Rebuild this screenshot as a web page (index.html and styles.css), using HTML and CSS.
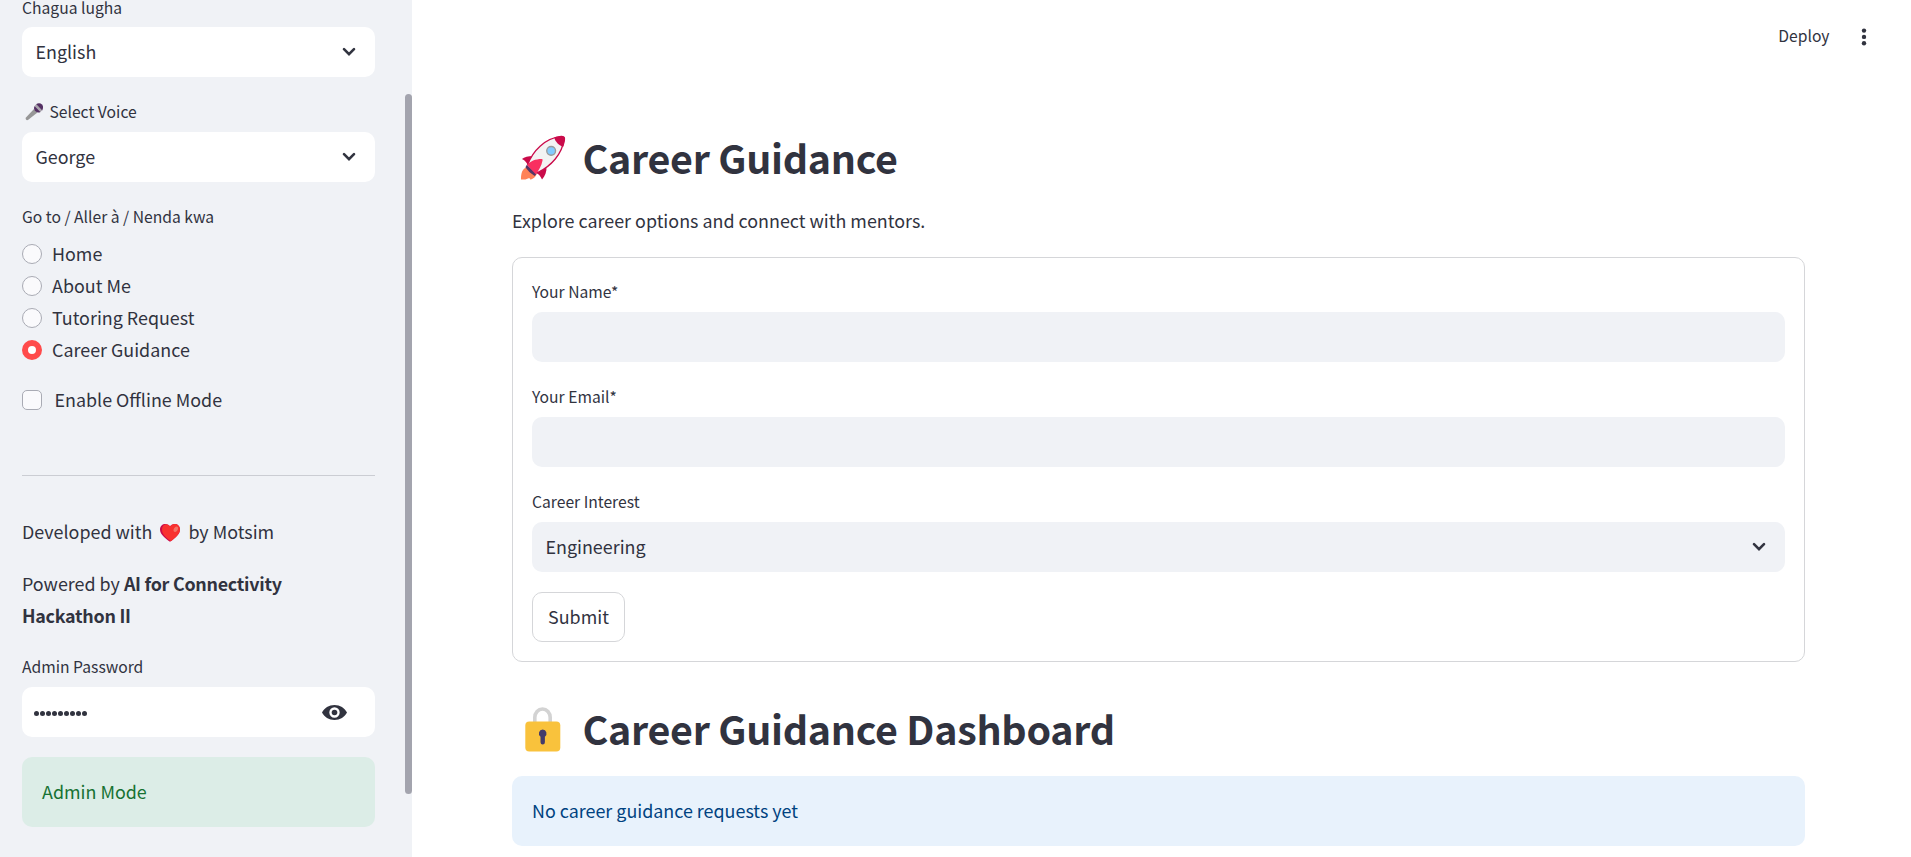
FILE: index.html
```html
<!DOCTYPE html>
<html lang="en">
<head>
<meta charset="utf-8">
<title>Career Guidance</title>
<link rel="stylesheet" href="styles.css">
</head>
<body>
<div class="app">
  <aside class="sidebar">
    <div class="field">
      <div class="label first">Chagua lugha</div>
      <div class="control select"><span>English</span><svg class="chevron" viewBox="0 0 14 10"><path d="M2 2.200 7 7.200l5-5"/></svg></div>
    </div>
    <div class="field">
      <div class="label"><svg class="mic" viewBox="0 0 18 18"><path d="M9 6 1.200 14.200Q0 15.500 1 16.600t2.600-.1L12.500 9.500Z" fill="#979797"/><path d="M11 1.200C13 0 15.500 0 17 1.500s1.300 4 0 6.200Z" fill="#543063"/><path d="M11.200 1.200 17 7.200 15.500 9 9.600 2.900Z" fill="#aaa5ad"/><path d="m9.600 2.900 5.900 6.100Q13 10.200 10.800 8.600 8 6 9.600 2.900Z" fill="#543063"/></svg><span>Select Voice</span></div>
      <div class="control select"><span>George</span><svg class="chevron" viewBox="0 0 14 10"><path d="M2 2.200 7 7.200l5-5"/></svg></div>
    </div>
    <div class="field">
      <div class="label">Go to / Aller à / Nenda kwa</div>
      <div class="radios">
        <div class="option"><i class="radio"></i><span>Home</span></div>
        <div class="option"><i class="radio"></i><span>About Me</span></div>
        <div class="option"><i class="radio"></i><span>Tutoring Request</span></div>
        <div class="option"><i class="radio checked"></i><span>Career Guidance</span></div>
      </div>
    </div>
    <div class="option offline"><i class="checkbox"></i><span>Enable Offline Mode</span></div>
    <hr class="divider">
    <p class="credit"><span>Developed with</span><svg class="heart" viewBox="0 0 20 18"><path d="M10 17.800C5 14 0 10.500 0 5.500 0 2 2.500 0 5.300 0 7.500 0 9.200 1 10 2.600 10.800 1 12.500 0 14.700 0 17.500 0 20 2 20 5.500c0 5-5 8.500-10 12.300Z" fill="#ca0b4a"/><path d="M10.800 17.200C5.800 13.500 2 10.500 2 5.600 2 2.300 3.800.4 6 .2c2 0 3.500 1 4.200 2.500C11 1 12.600 0 14.700 0 17.500 0 20 2 20 5.500c0 4.700-4.500 8.200-9.200 11.700Z" fill="#f8312f"/><ellipse cx="15.800" cy="5.300" rx="1.900" ry="2.900" transform="rotate(30 15.800 5.300)" fill="#f37366"/></svg><span>by Motsim</span></p>
    <p class="powered">Powered by <b>AI for Connectivity<br>Hackathon II</b></p>
    <div class="field">
      <div class="label">Admin Password</div>
      <div class="control password"><span class="dots"><i></i><i></i><i></i><i></i><i></i><i></i><i></i><i></i><i></i></span><svg class="eye" viewBox="0 0 25 15"><path fill-rule="evenodd" d="M12.500 0C7 0 2.200 3 0 7.500 2.200 12 7 15 12.500 15S22.800 12 25 7.500C22.800 3 18 0 12.500 0Zm0 2.300a5.200 5.200 0 1 1 0 10.400 5.200 5.200 0 0 1 0-10.400Z"/><circle cx="12.500" cy="7.500" r="2.800"/></svg></div>
    </div>
    <div class="alert success">Admin Mode</div>
    <div class="scrollbar"></div>
  </aside>
  <main class="main">
    <header class="toolbar"><span>Deploy</span><svg class="kebab" viewBox="0 0 6 18"><circle cx="3" cy="2.600" r="2.200"/><circle cx="3" cy="8.900" r="2.200"/><circle cx="3" cy="15.200" r="2.200"/></svg></header>
    <section class="content">
      <h1 class="title"><svg class="emoji" viewBox="0 -0.5 49 49"><path d="M7 33.500C2.500 35 1 39 1 46h4.500l4-1.500 1 1.500c4-1 7-4 6.500-7.500Z" fill="#ff8257"/><path d="M2 25c3-3 9-3.500 15-3L8 32Q7 27.500 2 25ZM27 33c.5 5-1.500 9.500-4.500 13-1.500-3.500-3.500-6-6.500-7Z" fill="#ca0b4a"/><path d="M8 30.500C13 17 25 4 42 2q3-.3 3 3c-2 15-13 27-27 34Z" fill="#f3f3f3" stroke="#ca0b4a" stroke-width="1.300"/><path d="M35 3C39 1.500 43 1 45 2s.8 5.500-.8 10.500C40 11.500 36 7.500 35 3Z" fill="#ca0b4a"/><path d="m7 31 10 9-2 2.500Q9 39 5.500 33.500Z" fill="#533566"/><path d="M7.500 31.500C10 27 16 25 22 25q1.500 0 1 1.500C22 32 19 37 16 40.500Z" fill="#f92f60"/><circle cx="31.800" cy="16.700" r="4.500" fill="#83cbff" stroke="#9b9b9b" stroke-width="1.400"/></svg><span>Career Guidance</span></h1>
      <p class="intro">Explore career options and connect with mentors.</p>
      <form class="form">
        <div class="field"><div class="label">Your Name*</div><div class="control"></div></div>
        <div class="field"><div class="label">Your Email*</div><div class="control"></div></div>
        <div class="field"><div class="label">Career Interest</div><div class="control select"><span>Engineering</span><svg class="chevron" viewBox="0 0 14 10"><path d="M2 2.200 7 7.200l5-5"/></svg></div></div>
        <button class="submit" type="button">Submit</button>
      </form>
      <h1 class="title second"><svg class="emoji" viewBox="-5 0 48 48"><path d="M9.800 20v-7.500a7.700 8.500 0 0 1 15.400 0V20" fill="none" stroke="#d3d3d3" stroke-width="3.600"/><rect x=".3" y="16.500" width="35" height="30" rx="4" fill="#f9c23c"/><path d="M17.700 24.500a4 4 0 0 1 2.200 7.200v5.500a2.200 2.200 0 0 1-4.400 0v-5.500a4 4 0 0 1 2.200-7.200Z" fill="#433b6b"/></svg><span>Career Guidance Dashboard</span></h1>
      <div class="alert info">No career guidance requests yet</div>
    </section>
  </main>
</div>
</body>
</html>
```
FILE: styles.css
```css
* { box-sizing: border-box; }
body {
  margin: 0;
  overflow: hidden;
  background: #fff;
  color: #31333f;
  font-family: "Noto Sans CJK SC", "Noto Sans", sans-serif;
  font-size: 17.9px;
  line-height: 32px;
}
p, h1 { margin: 0; }
.app { display: flex; height: 857px; }
.sidebar {
  position: relative;
  width: 412px;
  flex: none;
  background: #f0f2f6;
  padding: 0 37px 0 22px;
  display: flex;
  flex-direction: column;
  gap: 20px;
  overflow: hidden;
}
.sidebar > * { flex: none; }
.scrollbar {
  position: absolute;
  left: 405px;
  top: 94px;
  width: 7px;
  height: 700px;
  border-radius: 4px;
  background: #a3a4ae;
}
.label {
  display: flex;
  align-items: center;
  height: 30px;
  margin-bottom: 5px;
  font-size: 15.66px;
  line-height: 30px;
  white-space: nowrap;
}
.label.first { height: 22px; line-height: 16px; align-items: flex-start; }
.control {
  display: flex;
  align-items: center;
  height: 50px;
  border-radius: 10px;
  background: #fff;
}
.select { justify-content: space-between; padding: 0 19px 0 13.5px; }
.control > span, .option > span, .credit > span, .toolbar > span { padding-bottom: 2px; }
.chevron { width: 14px; height: 10px; fill: none; stroke: #31333f; stroke-width: 2.6; stroke-linecap: round; }
.mic { width: 18px; height: 18px; margin: 0 6.5px 0 3px; }
.radios { padding-top: 1px; }
.option { display: flex; align-items: center; height: 32px; gap: 10px; }
.offline { gap: 12.5px; margin-top: -2px; }
.radio, .checkbox {
  width: 20px;
  height: 20px;
  border: 1px solid #a9abb4;
  border-radius: 50%;
  background: #fafafc;
}
.checkbox { border-radius: 5px; }
.radio.checked { border: 6px solid #ff4b4b; background: #fff; }
.divider {
  width: 100%;
  height: 1px;
  margin: 39px 0 20px;
  border: 0;
  background: #cbcdd3;
}
.credit { display: flex; align-items: center; height: 32px; }
.heart { width: 20px; height: 18px; margin: 1px 8px 0; }
.powered { height: 64px; margin-top: -1px; margin-bottom: 1px; }
.powered b { letter-spacing: -0.27px; }
.password { justify-content: space-between; padding: 0 28px 0 10px; }
.dots { display: flex; gap: 1.1px; }
.control > .dots { padding: 3px 0 0 1.5px; }
.dots i { width: 5px; height: 5px; border-radius: 50%; background: #31333f; }
.eye { width: 25px; height: 15px; fill: #31333f; }
.alert { height: 70px; padding: 18px 20px; border-radius: 10px; }
.success { background: #dcede7; color: #177233; }
.info { background: #e8f2fc; color: #004280; }
.main { flex: 1; display: flex; flex-direction: column; }
.toolbar {
  display: flex;
  justify-content: flex-end;
  align-items: center;
  gap: 31.5px;
  height: 73px;
  padding-right: 44px;
  font-size: 15.66px;
}
.kebab { width: 6px; height: 18px; fill: #31333f; }
.content { padding: 47px 106px 0 100px; }
.title {
  display: flex;
  align-items: center;
  height: 76px;
  padding-left: 8px;
  gap: 14.5px;
  font-size: 39.4px;
  font-weight: 700;
  letter-spacing: -0.28px;
  line-height: 74px;
  white-space: nowrap;
}
.title > span { padding-bottom: 3px; }
.emoji { width: 48px; height: 48px; }
.intro { margin-top: 8px; }
.form {
  display: flex;
  flex-direction: column;
  align-items: stretch;
  gap: 20px;
  height: 405px;
  margin-top: 21px;
  padding: 19px;
  border: 1px solid #d5d6d9;
  border-radius: 10px;
}
.form .control { background: #f0f2f6; }
.submit {
  width: 93px;
  height: 50px;
  padding: 0 0 2px;
  border: 1px solid #d5d6d9;
  border-radius: 10px;
  background: #fff;
  color: inherit;
  font: inherit;
}
.second { margin-top: 29px; }
.info { margin-top: 9px; }
```
